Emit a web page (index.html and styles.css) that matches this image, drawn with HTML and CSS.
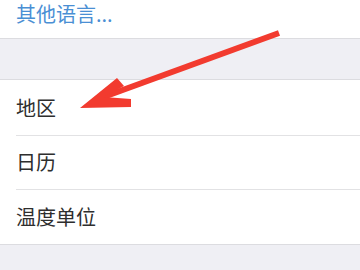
FILE: index.html
```html
<!DOCTYPE html>
<html lang="zh">
<head>
    <meta charset="UTF-8">
    <meta name="viewport" content="width=device-width, initial-scale=1.0">
    <title>语言与地区</title>
    <link rel="stylesheet" href="styles.css">
</head>
<body>

    <div class="page">
        <!-- Top group, scrolled so only the last row shows -->
        <div class="group group-top">
            <div class="row row-link">其他语言...</div>
        </div>

        <div class="gap"></div>

        <div class="group">
            <div class="row">地区</div>
            <div class="row">日历</div>
            <div class="row">温度单位</div>
        </div>

        <div class="gap-bottom"></div>

        <!-- Red annotation arrow drawn over the list -->
        <svg class="arrow" width="360" height="270" viewBox="0 0 360 270">
            <line x1="279" y1="33" x2="98" y2="99" stroke="#f23b2f" stroke-width="6" stroke-linecap="butt"/>
            <polygon points="80,108 117,78 124,86 104,97 131,99 131,107" fill="#f23b2f"/>
        </svg>
    </div>

</body>
</html>
```

FILE: styles.css
```css
* {
    box-sizing: border-box;
    margin: 0;
    padding: 0;
}

body {
    font-family: "Noto Sans CJK SC", "Noto Sans", sans-serif;
    background-color: #efeff4;
    width: 360px;
    height: 270px;
    overflow: hidden;
}

.page {
    position: relative;
    width: 360px;
    height: 270px;
}

.group {
    background-color: #fff;
    border-bottom: 1px solid #dcdce0;
}

.group-top {
    height: 39px;
}

.row {
    height: 54.5px;
    display: flex;
    align-items: center;
    padding-left: 16px;
    font-size: 20px;
    color: #2e2e2e;
    position: relative;
}

.row + .row::before {
    content: "";
    position: absolute;
    top: 0;
    left: 16px;
    right: 0;
    border-top: 1px solid #e2e2e4;
}

.row-link {
    height: 26px;
    color: #4a8fd4;
}

.gap {
    height: 41px;
    border-bottom: 1px solid #dcdce0;
}

.gap-bottom {
    height: 28px;
}

.arrow {
    position: absolute;
    top: 0;
    left: 0;
    pointer-events: none;
}
```
